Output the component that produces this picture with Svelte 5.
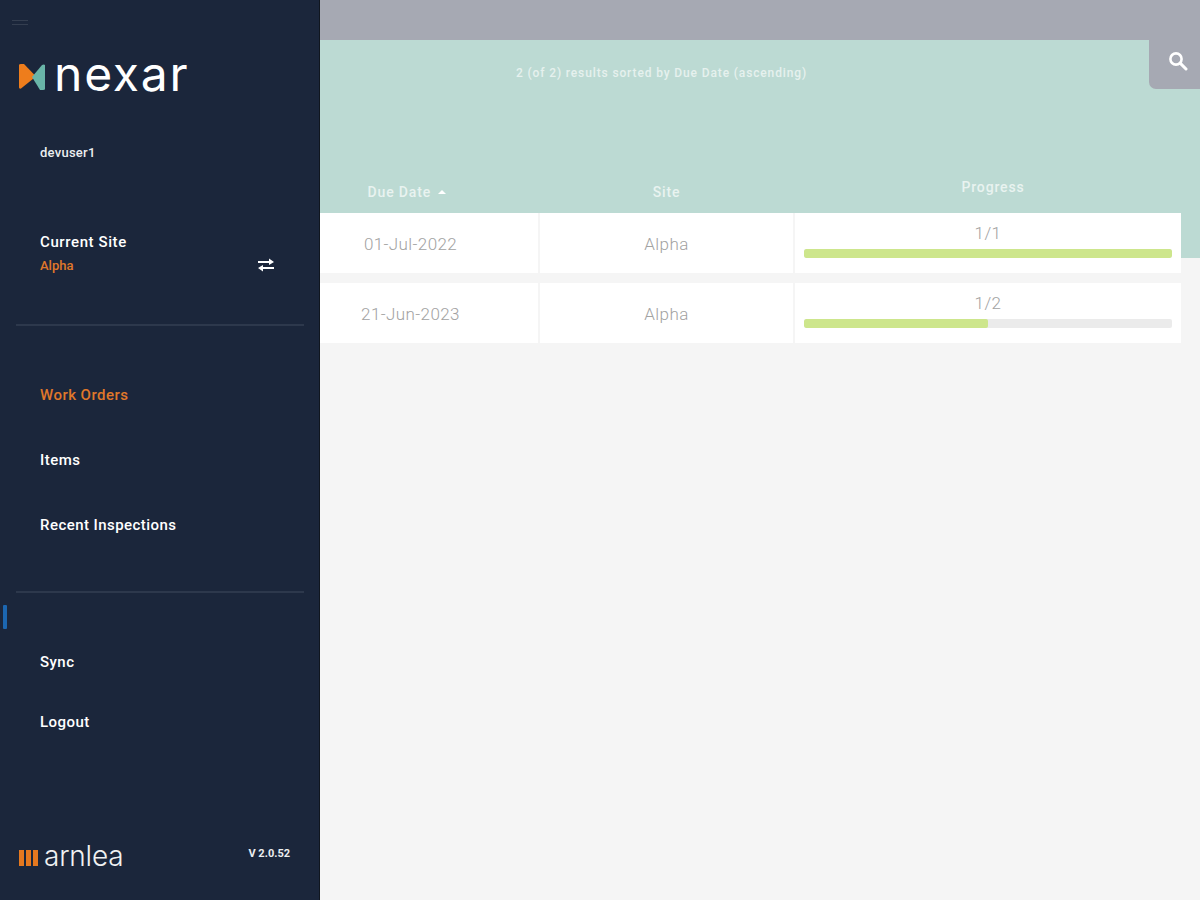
<script>
  const rows = [
    { due: '01-Jul-2022', site: 'Alpha', label: '1/1', pct: 100 },
    { due: '21-Jun-2023', site: 'Alpha', label: '1/2', pct: 50 }
  ];
</script>

<div class="app">
  <aside class="side">
    <span class="tick"></span>
    <div class="burger"><i></i><i></i></div>
    <div class="logo">
      <svg width="28" height="28" viewBox="0 0 28 28" aria-hidden="true">
        <path d="M1 2 Q1 1 3 1 L6 1 L18 13.5 L3 25.5 Q1 26 1 24.5 Z" fill="#ee7d1c" />
        <path d="M27 2 V26 Q27 27 25 27 L22 27 L14 14 L24 2 Q26 1 27 2 Z" fill="#69b5a8" />
      </svg>
      <span>nexar</span>
    </div>
    <div class="user">devuser1</div>
    <div class="site">
      <div>
        <div class="label">Current Site</div>
        <div class="orange small">Alpha</div>
      </div>
      <svg width="18" height="14" viewBox="0 0 18 14" aria-hidden="true">
        <path d="M1 4 H13 M17 10 H5" fill="none" stroke="#fff" stroke-width="2" />
        <path d="M12 0.5 L17 4 L12 7 Z M6 7 L1 10 L6 13.5 Z" fill="#fff" />
      </svg>
    </div>
    <hr />
    <nav class="nav">
      <a class="orange">Work Orders</a>
      <a>Items</a>
      <a>Recent Inspections</a>
    </nav>
    <hr class="second" />
    <nav class="nav lower">
      <a>Sync</a>
      <a>Logout</a>
    </nav>
    <div class="foot">
      <div class="arnlea">
        <span class="bars"><i></i><i></i><i></i></span>
        <span>arnlea</span>
      </div>
      <div class="version">V 2.0.52</div>
    </div>
  </aside>

  <main class="main">
    <div class="topbar"></div>
    <button class="search" aria-label="Search">
      <svg width="20" height="20" viewBox="0 0 20 20">
        <circle cx="8" cy="8" r="5.6" fill="none" stroke="#fff" stroke-width="2.6" />
        <path d="M12.4 12.4 L18 18" stroke="#fff" stroke-width="3" stroke-linecap="round" />
      </svg>
    </button>
    <section class="content">
      <p class="summary">2 (of 2) results sorted by Due Date (ascending)</p>
      <div class="head">
        <div class="hc">Due Date <span class="caret"></span></div>
        <div class="hc">Site</div>
        <div class="hc prog">Progress</div>
      </div>
      <div class="rows">
        {#each rows as r}
          <div class="row">
            <div class="cell first">{r.due}</div>
            <div class="cell">{r.site}</div>
            <div class="cell pcell">
              <div class="ptext">{r.label}</div>
              <div class="track"><div class="fill" style="width:{r.pct}%"></div></div>
            </div>
          </div>
        {/each}
      </div>
    </section>
  </main>
</div>

<style>
  :global(body) { margin: 0; background: #f5f5f5; }
  .app { display: flex; width: 1200px; height: 900px; overflow: hidden; font-family: Roboto, "Liberation Sans", sans-serif; }

  .side {
    position: relative;
    box-sizing: border-box;
    width: 320px;
    flex: none;
    display: flex;
    flex-direction: column;
    background: #1b263b;
    border-right: 1px solid #10161f;
    color: #fff;
    font-size: 14px;
    font-weight: 500;
  }
  .tick { position: absolute; left: 3px; top: 605px; width: 4px; height: 24px; background: #1c66b0; border-radius: 1px; }
  .burger { display: flex; flex-direction: column; gap: 3px; width: 16px; margin: 20px 0 0 12px; }
  .burger i { display: block; height: 1px; background: #343e50; }
  .logo { display: flex; align-items: center; gap: 8px; margin: 27px 0 0 18px; height: 50px; }
  .logo span { font-family: Inter, sans-serif; font-size: 48px; font-weight: 400; line-height: 50px; letter-spacing: 1.8px; position: relative; top: -3px; }
  .user { margin: 42px 0 0 40px; font-size: 13px; line-height: 18px; letter-spacing: 0.25px; color: #eceef0; }
  .site { display: flex; align-items: center; justify-content: space-between; margin: 71px 44px 0 40px; }
  .label { line-height: 18px; font-size: 15px; letter-spacing: 0.6px; }
  .small { font-size: 13px; line-height: 18px; margin-top: 6px; }
  .site svg { margin-top: 20px; position: relative; top: 1px; }
  .orange { color: #e0782a; }
  hr { height: 2px; border: 0; background: #2d384c; margin: 49px 15px 0 16px; }
  .nav { display: flex; flex-direction: column; margin-left: 40px; margin-top: 60px; gap: 47px; }
  .nav a { font-size: 15px; line-height: 18px; letter-spacing: 0.45px; }
  hr.second { margin-top: 57px; }
  .lower { margin-top: 60px; gap: 42px; }
  .foot { display: flex; align-items: center; justify-content: space-between; margin: auto 29px 26px 19px; }
  .arnlea { display: flex; align-items: center; gap: 6px; font-family: Inter, sans-serif; font-size: 28px; font-weight: 300; line-height: 36px; letter-spacing: -0.2px; color: #f0f1f2; }
  .bars { display: flex; gap: 2px; margin-top: 3px; }
  .bars i { display: block; width: 5px; height: 16px; background: #e5781f; }
  .version { font-size: 11px; font-weight: 700; margin-top: -6px; color: #eceef0; }

  .main { position: relative; flex: 1; min-width: 0; display: flex; flex-direction: column; }
  .topbar { height: 40px; background: #a6a9b3; flex: none; }
  .search {
    position: absolute; right: 0; top: 40px;
    width: 51px; height: 49px;
    padding: 0;
    border: 0;
    border-bottom-left-radius: 7px;
    background: #a6a9b3;
    display: flex; align-items: center; justify-content: center;
  }
  .search svg { margin: 0 0 8px 7px; }
  .content {
    flex: 1;
    padding: 0 19px 0 0;
    background: linear-gradient(#bcdad3 218px, #f5f5f5 218px);
  }
  .summary { margin: 26px 0 0 196px; font-size: 12px; font-weight: 500; line-height: 14px; letter-spacing: 0.87px; color: #e6f1ee; }
  .head, .row { display: grid; grid-template-columns: 218px 253px 1fr; column-gap: 2px; }
  .head { margin-top: 98px; height: 35px; color: #e9f3f0; font-size: 14px; font-weight: 500; letter-spacing: 0.85px; text-align: center; }
  .hc { line-height: 20px; margin-top: 4px; }
  .hc:first-child { padding-right: 44px; }
  .hc.prog { margin-top: -1px; padding-left: 10px; }
  .caret { display: inline-block; width: 0; height: 0; margin: 0 0 3px 3px; border: 4px solid transparent; border-top: 0; border-bottom: 4px solid #fff; }
  .rows { display: flex; flex-direction: column; gap: 10px; }
  .row { height: 60px; background: #f5f5f5; }
  .cell {
    box-sizing: border-box;
    background: #fff;
    display: flex;
    align-items: center;
    justify-content: center;
    color: #a2a2a2;
    font-size: 17px;
    font-weight: 300;
    letter-spacing: 0.4px;
    padding-top: 2px;
  }
  .first { padding-right: 37px; }
  .pcell { flex-direction: column; align-items: stretch; justify-content: flex-start; padding: 10px 9px 0 9px; }
  .ptext { text-align: center; line-height: 20px; }
  .track { height: 9px; margin-top: 6px; border-radius: 2px; background: #ebebeb; overflow: hidden; }
  .fill { height: 100%; background: #cde68c; border-radius: 2px; }
</style>
